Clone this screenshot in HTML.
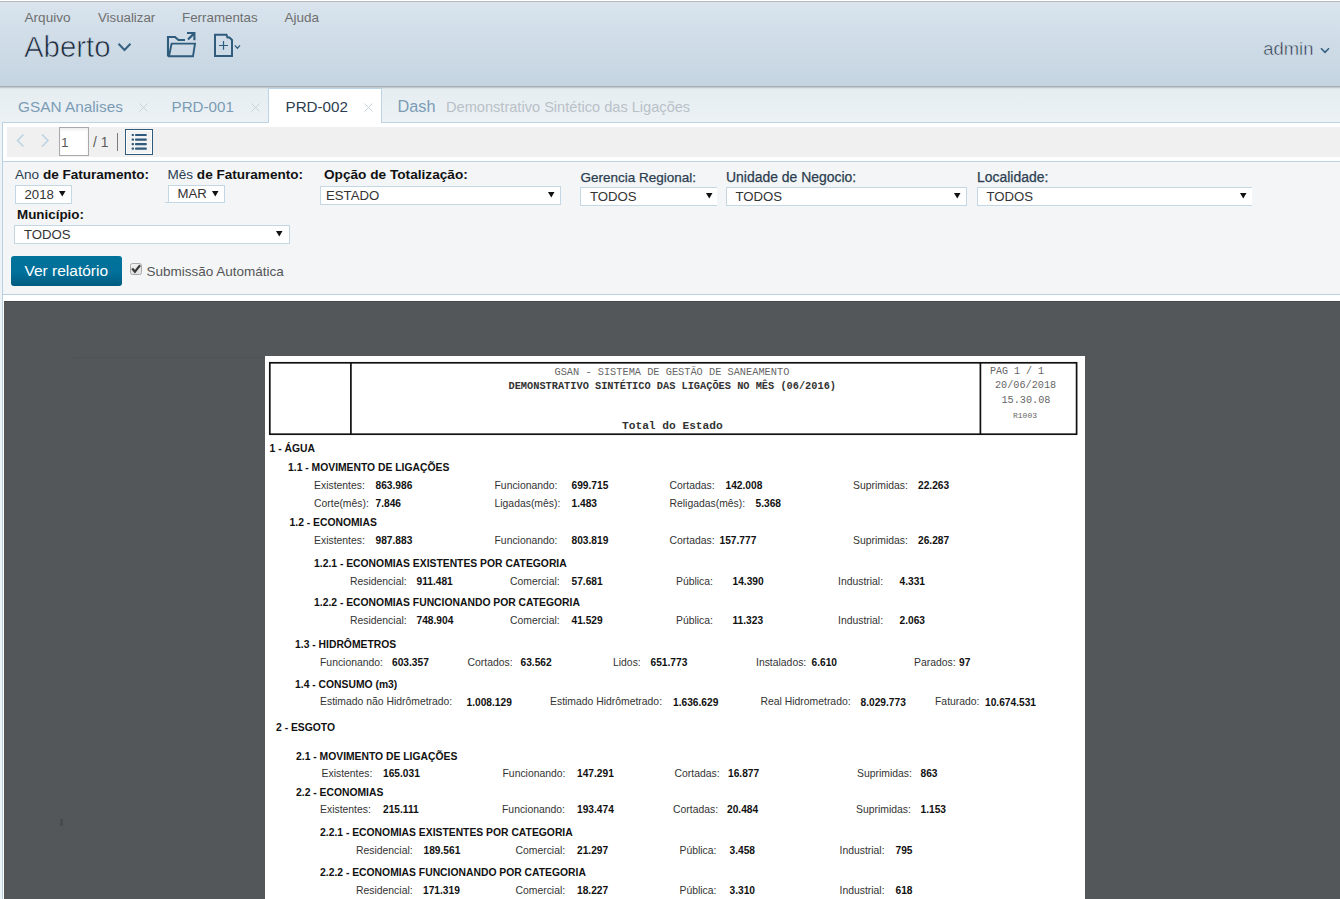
<!DOCTYPE html>
<html><head><meta charset="utf-8"><title>GSAN</title>
<style>
html,body{margin:0;padding:0;width:1340px;height:899px;overflow:hidden;background:#fff;position:relative}
body>span,body>div,body>svg{position:absolute;display:block}
span{white-space:pre;line-height:1;font-family:"Liberation Sans",sans-serif}
</style></head><body>
<div style="left:0px;top:1px;width:1340px;height:1px;background:#b9babd"></div>
<div style="left:0px;top:2px;width:1340px;height:84px;background:linear-gradient(#d9e4ed,#c4d4e1)"></div>
<div style="left:0px;top:87px;width:1340px;height:35px;background:linear-gradient(#e6edf1,#ebf1f5)"></div>
<div style="left:0px;top:86px;width:1340px;height:1px;background:#a9aeb1"></div>
<div style="left:0px;top:87px;width:1340px;height:1px;background:#c3c9cc"></div>
<div style="left:0px;top:88px;width:1340px;height:1px;background:#dce3e6"></div>
<span style="left:24.5px;top:10.5px;font-size:13.6px;font-weight:normal;color:#6f6f6f;font-family:'Liberation Sans', sans-serif;">Arquivo</span>
<span style="left:98.0px;top:10.8px;font-size:13.25px;font-weight:normal;color:#6f6f6f;font-family:'Liberation Sans', sans-serif;">Visualizar</span>
<span style="left:182.0px;top:10.7px;font-size:13.35px;font-weight:normal;color:#6f6f6f;font-family:'Liberation Sans', sans-serif;">Ferramentas</span>
<span style="left:284.5px;top:10.6px;font-size:13.5px;font-weight:normal;color:#6f6f6f;font-family:'Liberation Sans', sans-serif;">Ajuda</span>
<span style="left:24.0px;top:31.8px;font-size:29.4px;font-weight:normal;color:#1c2a38;font-family:'Liberation Sans', sans-serif;-webkit-text-stroke:0.7px #cfdbe5;">Aberto</span>
<svg style="left:117px;top:42px" width="16" height="11"><path d="M1.5 1.8 L7.5 8 L13.5 1.8" fill="none" stroke="#35607f" stroke-width="2"/></svg>
<svg style="left:165px;top:30px" width="34" height="30" viewBox="0 0 34 30">
<path d="M3 26.5 V7 H10 L13.5 10 H20" fill="none" stroke="#2f5b7c" stroke-width="2.1"/>
<path d="M3 26.2 H28 L30 13.6 H6.6 L4 26.2" fill="none" stroke="#2f5b7c" stroke-width="1.9"/>
<path d="M23 9.5 L29 3.5" stroke="#2f5b7c" stroke-width="2.3"/>
<path d="M22 3 H29.4 V10.2" fill="none" stroke="#2f5b7c" stroke-width="2.1"/>
</svg>
<svg style="left:212px;top:32px" width="32" height="28" viewBox="0 0 32 28">
<path d="M3 24 V2.8 H14.5 L15.5 5.5 H17.5 L20 8 V24 Z" fill="none" stroke="#2f5b7c" stroke-width="2"/>
<path d="M11.5 9 V17.8 M7 13.5 H16" stroke="#2f5b7c" stroke-width="1.2"/>
<path d="M22.8 13.4 L25.4 16.2 L28 13.4" fill="none" stroke="#2f5b7c" stroke-width="1.3"/>
</svg>
<span style="left:1263.3px;top:40.4px;font-size:18.4px;font-weight:normal;color:#222f3c;font-family:'Liberation Sans', sans-serif;-webkit-text-stroke:0.55px #cdd9e4;">admin</span>
<svg style="left:1319px;top:46px" width="12" height="9"><path d="M2 2.3 L6 6.3 L10 2.3" fill="none" stroke="#35607f" stroke-width="1.6"/></svg>
<div style="left:268px;top:88px;width:114px;height:35px;background:#fff;border:1px solid #bcd4e3;border-bottom:none;box-sizing:border-box"></div>
<div style="left:0px;top:122px;width:268px;height:1px;background:#bcd4e3"></div>
<div style="left:381px;top:122px;width:959px;height:1px;background:#bcd4e3"></div>
<span style="left:18.0px;top:99.0px;font-size:15.35px;font-weight:normal;color:#7b9cb5;font-family:'Liberation Sans', sans-serif;">GSAN Analises</span>
<span style="left:171.5px;top:99.1px;font-size:15.2px;font-weight:normal;color:#7b9cb5;font-family:'Liberation Sans', sans-serif;">PRD-001</span>
<span style="left:285.5px;top:99.1px;font-size:15.2px;font-weight:normal;color:#2c3e50;font-family:'Liberation Sans', sans-serif;">PRD-002</span>
<span style="left:397.5px;top:98.2px;font-size:16.3px;font-weight:normal;color:#7b9cb5;font-family:'Liberation Sans', sans-serif;">Dash</span>
<span style="left:446.0px;top:99.6px;font-size:14.6px;font-weight:normal;color:#b9c1c7;font-family:'Liberation Sans', sans-serif;">Demonstrativo Sintético das Ligações</span>
<svg style="left:138px;top:102px" width="11" height="11"><path d="M1.5 1.5 L9.5 9.5 M9.5 1.5 L1.5 9.5" stroke="#c9d2d9" stroke-width="1"/></svg>
<svg style="left:250px;top:102px" width="11" height="11"><path d="M1.5 1.5 L9.5 9.5 M9.5 1.5 L1.5 9.5" stroke="#c9d2d9" stroke-width="1"/></svg>
<svg style="left:363px;top:102px" width="11" height="11"><path d="M1.5 1.5 L9.5 9.5 M9.5 1.5 L1.5 9.5" stroke="#c9d2d9" stroke-width="1"/></svg>
<div style="left:0px;top:122px;width:2px;height:777px;background:#eef3f6"></div>
<div style="left:2px;top:122px;width:1px;height:777px;background:#b8d1e1"></div>
<div style="left:3px;top:123px;width:1337px;height:38px;background:#fff"></div>
<div style="left:7px;top:127px;width:1333px;height:30px;background:#f0f0f0"></div>
<svg style="left:14px;top:133px" width="40" height="16"><path d="M9.5 1.5 L3.5 7.5 L9.5 13.5" fill="none" stroke="#bcd3e3" stroke-width="1.6"/><path d="M28 1.5 L34 7.5 L28 13.5" fill="none" stroke="#bcd3e3" stroke-width="1.6"/></svg>
<div style="left:59px;top:127px;width:30px;height:29px;background:#fff;border:1px solid #a9a9a9;box-sizing:border-box;box-shadow:inset 0 2px 3px rgba(0,0,0,0.07)"></div>
<span style="left:61.0px;top:136.0px;font-size:13.6px;font-weight:normal;color:#5a5a5a;font-family:'Liberation Sans', sans-serif;">1</span>
<span style="left:93.0px;top:135.8px;font-size:13.8px;font-weight:normal;color:#5a5a5a;font-family:'Liberation Sans', sans-serif;">/ 1</span>
<div style="left:117px;top:133px;width:1px;height:18px;background:#7a7a7a"></div>
<div style="left:125px;top:129px;width:28px;height:26px;border:1px solid #2f5a7c;box-sizing:border-box;background:#f2f2f2;box-shadow:inset 0 0 0 1px #fff"></div>
<svg style="left:125px;top:129px" width="28" height="26">
<g fill="#2f5a7c"><rect x="6.6" y="4.9" width="2.4" height="2.2" rx="0.8"/><rect x="10" y="4.9" width="11.8" height="2.2" rx="0.8"/>
<rect x="6.6" y="9.5" width="2.4" height="2.2" rx="0.8"/><rect x="10" y="9.5" width="11.8" height="2.2" rx="0.8"/>
<rect x="6.6" y="14" width="2.4" height="2.2" rx="0.8"/><rect x="10" y="14" width="11.8" height="2.2" rx="0.8"/>
<rect x="6.6" y="18.6" width="2.4" height="2.2" rx="0.8"/><rect x="10" y="18.6" width="11.8" height="2.2" rx="0.8"/></g></svg>
<div style="left:3px;top:161px;width:1337px;height:1px;background:#bcd4e3"></div>
<div style="left:3px;top:162px;width:1337px;height:132px;background:#f3f5f7"></div>
<div style="left:3px;top:294px;width:1337px;height:1px;background:#b9d2e1"></div>
<div style="left:3px;top:295px;width:1337px;height:6px;background:#fff"></div>
<span style="left:15.0px;top:168.2px;font-size:13.55px;font-weight:normal;color:#111;font-family:'Liberation Sans', sans-serif;"><span style="color:#2c3e50">Ano</span> <b>de Faturamento:</b></span>
<div style="left:15px;top:185px;width:57px;height:19px;background:#fff;box-sizing:border-box;border:1px solid #c3d7e4;"></div>
<span style="left:24.5px;top:188.2px;font-size:13.2px;font-weight:normal;color:#333;font-family:'Liberation Sans', sans-serif;">2018</span>
<svg style="left:59px;top:191px" width="7" height="6"><path d="M0 0 H6.5 L3.25 5.5Z" fill="#111"/></svg>
<span style="left:167.5px;top:168.2px;font-size:13.55px;font-weight:normal;color:#111;font-family:'Liberation Sans', sans-serif;"><span style="color:#2c3e50">Mês</span> <b>de Faturamento:</b></span>
<div style="left:168px;top:185px;width:57px;height:18px;background:#fff;box-sizing:border-box;border:1px solid #c3d7e4;"></div>
<span style="left:177.5px;top:187.2px;font-size:13.2px;font-weight:normal;color:#333;font-family:'Liberation Sans', sans-serif;">MAR</span>
<svg style="left:212px;top:191px" width="7" height="6"><path d="M0 0 H6.5 L3.25 5.5Z" fill="#111"/></svg>
<div style="left:165px;top:202px;width:20px;height:1px;background:#c3d7e4"></div>
<span style="left:324.0px;top:168.2px;font-size:13.65px;font-weight:bold;color:#111;font-family:'Liberation Sans', sans-serif;">Opção de Totalização:</span>
<div style="left:320px;top:186px;width:241px;height:19px;background:#fff;box-sizing:border-box;border:1px solid #c3d7e4;"></div>
<span style="left:326.0px;top:189.2px;font-size:13.2px;font-weight:normal;color:#333;font-family:'Liberation Sans', sans-serif;">ESTADO</span>
<svg style="left:548px;top:192px" width="7" height="6"><path d="M0 0 H6.5 L3.25 5.5Z" fill="#111"/></svg>
<span style="left:580.5px;top:170.6px;font-size:13.5px;font-weight:normal;color:#2c3e50;font-family:'Liberation Sans', sans-serif;-webkit-text-stroke:0.25px #2c3e50;">Gerencia Regional:</span>
<div style="left:580px;top:187px;width:137px;height:19px;background:#fff;box-sizing:border-box;border:1px solid #c3d7e4;border-right:none;"></div>
<span style="left:590.0px;top:190.2px;font-size:13.2px;font-weight:normal;color:#333;font-family:'Liberation Sans', sans-serif;">TODOS</span>
<svg style="left:706px;top:193px" width="7" height="6"><path d="M0 0 H6.5 L3.25 5.5Z" fill="#111"/></svg>
<span style="left:726.0px;top:170.9px;font-size:13.95px;font-weight:normal;color:#2c3e50;font-family:'Liberation Sans', sans-serif;-webkit-text-stroke:0.25px #2c3e50;">Unidade de Negocio:</span>
<div style="left:726px;top:187px;width:241px;height:19px;background:#fff;box-sizing:border-box;border:1px solid #c3d7e4;"></div>
<span style="left:735.5px;top:190.2px;font-size:13.2px;font-weight:normal;color:#333;font-family:'Liberation Sans', sans-serif;">TODOS</span>
<svg style="left:954px;top:193px" width="7" height="6"><path d="M0 0 H6.5 L3.25 5.5Z" fill="#111"/></svg>
<span style="left:977.0px;top:170.9px;font-size:13.95px;font-weight:normal;color:#2c3e50;font-family:'Liberation Sans', sans-serif;-webkit-text-stroke:0.25px #2c3e50;">Localidade:</span>
<div style="left:977px;top:187px;width:275px;height:19px;background:#fff;box-sizing:border-box;border:1px solid #c3d7e4;border-right:none;"></div>
<span style="left:986.5px;top:190.2px;font-size:13.2px;font-weight:normal;color:#333;font-family:'Liberation Sans', sans-serif;">TODOS</span>
<svg style="left:1240px;top:193px" width="7" height="6"><path d="M0 0 H6.5 L3.25 5.5Z" fill="#111"/></svg>
<span style="left:17.0px;top:208.4px;font-size:13.4px;font-weight:bold;color:#111;font-family:'Liberation Sans', sans-serif;">Município:</span>
<div style="left:14px;top:225px;width:276px;height:19px;background:#fff;box-sizing:border-box;border:1px solid #c3d7e4;"></div>
<span style="left:24.0px;top:228.2px;font-size:13.2px;font-weight:normal;color:#333;font-family:'Liberation Sans', sans-serif;">TODOS</span>
<svg style="left:276px;top:231px" width="7" height="6"><path d="M0 0 H6.5 L3.25 5.5Z" fill="#111"/></svg>
<div style="left:11px;top:256px;width:111px;height:30px;background:linear-gradient(#03739b 0%,#01709a 55%,#005b7f 100%);border-radius:3px"></div>
<span style="left:24.5px;top:262.7px;font-size:15.5px;font-weight:normal;color:#fff;font-family:'Liberation Sans', sans-serif;">Ver relatório</span>
<div style="left:130px;top:263px;width:12px;height:12px;background:linear-gradient(#f0f0f0,#e2e2e2);border:1px solid #a8a8a8;border-radius:2.5px;box-sizing:border-box"></div>
<svg style="left:130px;top:263px" width="12" height="12"><path d="M2.9 6.3 L4.9 8.7 L9.4 3.1" fill="none" stroke="#3a3a3a" stroke-width="2.2" stroke-linecap="square"/></svg>
<span style="left:146.5px;top:264.6px;font-size:13.5px;font-weight:normal;color:#555;font-family:'Liberation Sans', sans-serif;">Submissão Automática</span>
<div style="left:4px;top:301px;width:1336px;height:598px;background:#545759"></div>
<div style="left:4px;top:301px;width:1336px;height:1px;background:#46494b"></div>
<div style="left:74px;top:357px;width:191px;height:1px;background:#4f5254"></div>
<div style="left:60px;top:819px;width:3px;height:7px;background:#484b4d"></div>
<div style="left:265px;top:356px;width:820px;height:543px;background:#fff"></div>
<svg style="left:265px;top:356px" width="820" height="90"><g fill="none" stroke="#111" stroke-width="1.7"><rect x="4.8" y="6.8" width="806.8" height="71.4"/><path d="M85.9 6.8 V78.2 M715.4 6.8 V78.2"/></g></svg>
<span style="left:554.5px;top:366.5px;font-size:10.3px;font-weight:normal;color:#666;font-family:'Liberation Mono', monospace;">GSAN - SISTEMA DE GESTÃO DE SANEAMENTO</span>
<span style="left:508.5px;top:380.8px;font-size:10.3px;font-weight:bold;color:#333;font-family:'Liberation Mono', monospace;">DEMONSTRATIVO SINTÉTICO DAS LIGAÇÕES NO MÊS (06/2016)</span>
<span style="left:622.0px;top:420.6px;font-size:11.2px;font-weight:bold;color:#333;font-family:'Liberation Mono', monospace;">Total do Estado</span>
<span style="left:990.0px;top:367.1px;font-size:10px;font-weight:normal;color:#666;font-family:'Liberation Mono', monospace;">PAG 1 / 1</span>
<span style="left:995.0px;top:381.0px;font-size:10.2px;font-weight:normal;color:#666;font-family:'Liberation Mono', monospace;">20/06/2018</span>
<span style="left:1001.5px;top:396.0px;font-size:10.2px;font-weight:normal;color:#666;font-family:'Liberation Mono', monospace;">15.30.08</span>
<span style="left:1013.0px;top:411.6px;font-size:8px;font-weight:normal;color:#666;font-family:'Liberation Mono', monospace;">R1003</span>
<span style="left:269.5px;top:444.1px;font-size:10.35px;font-weight:bold;color:#111;font-family:'Liberation Sans', sans-serif;">1 - ÁGUA</span>
<span style="left:288.0px;top:463.2px;font-size:10.35px;font-weight:bold;color:#111;font-family:'Liberation Sans', sans-serif;">1.1 - MOVIMENTO DE LIGAÇÕES</span>
<span style="left:314.0px;top:480.8px;font-size:10.4px;font-weight:normal;color:#333;font-family:'Liberation Sans', sans-serif;">Existentes:</span>
<span style="left:375.5px;top:481.0px;font-size:10.2px;font-weight:bold;color:#111;font-family:'Liberation Sans', sans-serif;">863.986</span>
<span style="left:494.5px;top:480.8px;font-size:10.4px;font-weight:normal;color:#333;font-family:'Liberation Sans', sans-serif;">Funcionando:</span>
<span style="left:571.5px;top:481.0px;font-size:10.2px;font-weight:bold;color:#111;font-family:'Liberation Sans', sans-serif;">699.715</span>
<span style="left:669.5px;top:480.8px;font-size:10.4px;font-weight:normal;color:#333;font-family:'Liberation Sans', sans-serif;">Cortadas:</span>
<span style="left:725.5px;top:481.0px;font-size:10.2px;font-weight:bold;color:#111;font-family:'Liberation Sans', sans-serif;">142.008</span>
<span style="left:853.0px;top:480.8px;font-size:10.4px;font-weight:normal;color:#333;font-family:'Liberation Sans', sans-serif;">Suprimidas:</span>
<span style="left:918.0px;top:481.0px;font-size:10.2px;font-weight:bold;color:#111;font-family:'Liberation Sans', sans-serif;">22.263</span>
<span style="left:314.0px;top:499.1px;font-size:10.4px;font-weight:normal;color:#333;font-family:'Liberation Sans', sans-serif;">Corte(mês):</span>
<span style="left:375.5px;top:499.3px;font-size:10.2px;font-weight:bold;color:#111;font-family:'Liberation Sans', sans-serif;">7.846</span>
<span style="left:494.5px;top:499.1px;font-size:10.4px;font-weight:normal;color:#333;font-family:'Liberation Sans', sans-serif;">Ligadas(mês):</span>
<span style="left:571.5px;top:499.3px;font-size:10.2px;font-weight:bold;color:#111;font-family:'Liberation Sans', sans-serif;">1.483</span>
<span style="left:669.5px;top:499.1px;font-size:10.4px;font-weight:normal;color:#333;font-family:'Liberation Sans', sans-serif;">Religadas(mês):</span>
<span style="left:755.5px;top:499.3px;font-size:10.2px;font-weight:bold;color:#111;font-family:'Liberation Sans', sans-serif;">5.368</span>
<span style="left:289.5px;top:518.4px;font-size:10.35px;font-weight:bold;color:#111;font-family:'Liberation Sans', sans-serif;">1.2 - ECONOMIAS</span>
<span style="left:314.0px;top:535.8px;font-size:10.4px;font-weight:normal;color:#333;font-family:'Liberation Sans', sans-serif;">Existentes:</span>
<span style="left:375.5px;top:536.0px;font-size:10.2px;font-weight:bold;color:#111;font-family:'Liberation Sans', sans-serif;">987.883</span>
<span style="left:494.5px;top:535.8px;font-size:10.4px;font-weight:normal;color:#333;font-family:'Liberation Sans', sans-serif;">Funcionando:</span>
<span style="left:571.5px;top:536.0px;font-size:10.2px;font-weight:bold;color:#111;font-family:'Liberation Sans', sans-serif;">803.819</span>
<span style="left:669.5px;top:535.8px;font-size:10.4px;font-weight:normal;color:#333;font-family:'Liberation Sans', sans-serif;">Cortadas:</span>
<span style="left:719.5px;top:536.0px;font-size:10.2px;font-weight:bold;color:#111;font-family:'Liberation Sans', sans-serif;">157.777</span>
<span style="left:853.0px;top:535.8px;font-size:10.4px;font-weight:normal;color:#333;font-family:'Liberation Sans', sans-serif;">Suprimidas:</span>
<span style="left:918.0px;top:536.0px;font-size:10.2px;font-weight:bold;color:#111;font-family:'Liberation Sans', sans-serif;">26.287</span>
<span style="left:314.0px;top:559.3px;font-size:10.35px;font-weight:bold;color:#111;font-family:'Liberation Sans', sans-serif;">1.2.1 - ECONOMIAS EXISTENTES POR CATEGORIA</span>
<span style="left:350.0px;top:576.7px;font-size:10.4px;font-weight:normal;color:#333;font-family:'Liberation Sans', sans-serif;">Residencial:</span>
<span style="left:416.5px;top:576.9px;font-size:10.2px;font-weight:bold;color:#111;font-family:'Liberation Sans', sans-serif;">911.481</span>
<span style="left:510.0px;top:576.7px;font-size:10.4px;font-weight:normal;color:#333;font-family:'Liberation Sans', sans-serif;">Comercial:</span>
<span style="left:571.5px;top:576.9px;font-size:10.2px;font-weight:bold;color:#111;font-family:'Liberation Sans', sans-serif;">57.681</span>
<span style="left:676.0px;top:576.7px;font-size:10.4px;font-weight:normal;color:#333;font-family:'Liberation Sans', sans-serif;">Pública:</span>
<span style="left:732.5px;top:576.9px;font-size:10.2px;font-weight:bold;color:#111;font-family:'Liberation Sans', sans-serif;">14.390</span>
<span style="left:838.0px;top:576.7px;font-size:10.4px;font-weight:normal;color:#333;font-family:'Liberation Sans', sans-serif;">Industrial:</span>
<span style="left:899.5px;top:576.9px;font-size:10.2px;font-weight:bold;color:#111;font-family:'Liberation Sans', sans-serif;">4.331</span>
<span style="left:314.0px;top:598.2px;font-size:10.35px;font-weight:bold;color:#111;font-family:'Liberation Sans', sans-serif;">1.2.2 - ECONOMIAS FUNCIONANDO POR CATEGORIA</span>
<span style="left:350.0px;top:616.1px;font-size:10.4px;font-weight:normal;color:#333;font-family:'Liberation Sans', sans-serif;">Residencial:</span>
<span style="left:416.5px;top:616.3px;font-size:10.2px;font-weight:bold;color:#111;font-family:'Liberation Sans', sans-serif;">748.904</span>
<span style="left:510.0px;top:616.1px;font-size:10.4px;font-weight:normal;color:#333;font-family:'Liberation Sans', sans-serif;">Comercial:</span>
<span style="left:571.5px;top:616.3px;font-size:10.2px;font-weight:bold;color:#111;font-family:'Liberation Sans', sans-serif;">41.529</span>
<span style="left:676.0px;top:616.1px;font-size:10.4px;font-weight:normal;color:#333;font-family:'Liberation Sans', sans-serif;">Pública:</span>
<span style="left:732.5px;top:616.3px;font-size:10.2px;font-weight:bold;color:#111;font-family:'Liberation Sans', sans-serif;">11.323</span>
<span style="left:838.0px;top:616.1px;font-size:10.4px;font-weight:normal;color:#333;font-family:'Liberation Sans', sans-serif;">Industrial:</span>
<span style="left:899.5px;top:616.3px;font-size:10.2px;font-weight:bold;color:#111;font-family:'Liberation Sans', sans-serif;">2.063</span>
<span style="left:295.0px;top:640.3px;font-size:10.35px;font-weight:bold;color:#111;font-family:'Liberation Sans', sans-serif;">1.3 - HIDRÔMETROS</span>
<span style="left:320.0px;top:657.5px;font-size:10.4px;font-weight:normal;color:#333;font-family:'Liberation Sans', sans-serif;">Funcionando:</span>
<span style="left:392.0px;top:657.7px;font-size:10.2px;font-weight:bold;color:#111;font-family:'Liberation Sans', sans-serif;">603.357</span>
<span style="left:467.5px;top:657.5px;font-size:10.4px;font-weight:normal;color:#333;font-family:'Liberation Sans', sans-serif;">Cortados:</span>
<span style="left:520.5px;top:657.7px;font-size:10.2px;font-weight:bold;color:#111;font-family:'Liberation Sans', sans-serif;">63.562</span>
<span style="left:613.0px;top:657.5px;font-size:10.4px;font-weight:normal;color:#333;font-family:'Liberation Sans', sans-serif;">Lidos:</span>
<span style="left:650.5px;top:657.7px;font-size:10.2px;font-weight:bold;color:#111;font-family:'Liberation Sans', sans-serif;">651.773</span>
<span style="left:756.0px;top:657.5px;font-size:10.4px;font-weight:normal;color:#333;font-family:'Liberation Sans', sans-serif;">Instalados:</span>
<span style="left:811.5px;top:657.7px;font-size:10.2px;font-weight:bold;color:#111;font-family:'Liberation Sans', sans-serif;">6.610</span>
<span style="left:914.0px;top:657.5px;font-size:10.4px;font-weight:normal;color:#333;font-family:'Liberation Sans', sans-serif;">Parados:</span>
<span style="left:959.0px;top:657.7px;font-size:10.2px;font-weight:bold;color:#111;font-family:'Liberation Sans', sans-serif;">97</span>
<span style="left:295.0px;top:679.5px;font-size:10.35px;font-weight:bold;color:#111;font-family:'Liberation Sans', sans-serif;">1.4 - CONSUMO (m3)</span>
<span style="left:320.0px;top:697.3px;font-size:10.4px;font-weight:normal;color:#333;font-family:'Liberation Sans', sans-serif;">Estimado não Hidrômetrado:</span>
<span style="left:466.5px;top:697.5px;font-size:10.2px;font-weight:bold;color:#111;font-family:'Liberation Sans', sans-serif;">1.008.129</span>
<span style="left:550.0px;top:697.3px;font-size:10.4px;font-weight:normal;color:#333;font-family:'Liberation Sans', sans-serif;">Estimado Hidrômetrado:</span>
<span style="left:673.0px;top:697.5px;font-size:10.2px;font-weight:bold;color:#111;font-family:'Liberation Sans', sans-serif;">1.636.629</span>
<span style="left:760.5px;top:697.3px;font-size:10.4px;font-weight:normal;color:#333;font-family:'Liberation Sans', sans-serif;">Real Hidrometrado:</span>
<span style="left:860.5px;top:697.5px;font-size:10.2px;font-weight:bold;color:#111;font-family:'Liberation Sans', sans-serif;">8.029.773</span>
<span style="left:935.0px;top:697.3px;font-size:10.4px;font-weight:normal;color:#333;font-family:'Liberation Sans', sans-serif;">Faturado:</span>
<span style="left:985.0px;top:697.5px;font-size:10.2px;font-weight:bold;color:#111;font-family:'Liberation Sans', sans-serif;">10.674.531</span>
<span style="left:276.0px;top:722.6px;font-size:10.35px;font-weight:bold;color:#111;font-family:'Liberation Sans', sans-serif;">2 - ESGOTO</span>
<span style="left:296.0px;top:751.9px;font-size:10.35px;font-weight:bold;color:#111;font-family:'Liberation Sans', sans-serif;">2.1 - MOVIMENTO DE LIGAÇÕES</span>
<span style="left:321.5px;top:769.2px;font-size:10.4px;font-weight:normal;color:#333;font-family:'Liberation Sans', sans-serif;">Existentes:</span>
<span style="left:383.0px;top:769.4px;font-size:10.2px;font-weight:bold;color:#111;font-family:'Liberation Sans', sans-serif;">165.031</span>
<span style="left:502.5px;top:769.2px;font-size:10.4px;font-weight:normal;color:#333;font-family:'Liberation Sans', sans-serif;">Funcionando:</span>
<span style="left:577.0px;top:769.4px;font-size:10.2px;font-weight:bold;color:#111;font-family:'Liberation Sans', sans-serif;">147.291</span>
<span style="left:674.5px;top:769.2px;font-size:10.4px;font-weight:normal;color:#333;font-family:'Liberation Sans', sans-serif;">Cortadas:</span>
<span style="left:728.0px;top:769.4px;font-size:10.2px;font-weight:bold;color:#111;font-family:'Liberation Sans', sans-serif;">16.877</span>
<span style="left:857.0px;top:769.2px;font-size:10.4px;font-weight:normal;color:#333;font-family:'Liberation Sans', sans-serif;">Suprimidas:</span>
<span style="left:920.5px;top:769.4px;font-size:10.2px;font-weight:bold;color:#111;font-family:'Liberation Sans', sans-serif;">863</span>
<span style="left:296.0px;top:787.7px;font-size:10.35px;font-weight:bold;color:#111;font-family:'Liberation Sans', sans-serif;">2.2 - ECONOMIAS</span>
<span style="left:320.0px;top:805.0px;font-size:10.4px;font-weight:normal;color:#333;font-family:'Liberation Sans', sans-serif;">Existentes:</span>
<span style="left:383.0px;top:805.2px;font-size:10.2px;font-weight:bold;color:#111;font-family:'Liberation Sans', sans-serif;">215.111</span>
<span style="left:502.0px;top:805.0px;font-size:10.4px;font-weight:normal;color:#333;font-family:'Liberation Sans', sans-serif;">Funcionando:</span>
<span style="left:577.0px;top:805.2px;font-size:10.2px;font-weight:bold;color:#111;font-family:'Liberation Sans', sans-serif;">193.474</span>
<span style="left:673.0px;top:805.0px;font-size:10.4px;font-weight:normal;color:#333;font-family:'Liberation Sans', sans-serif;">Cortadas:</span>
<span style="left:727.0px;top:805.2px;font-size:10.2px;font-weight:bold;color:#111;font-family:'Liberation Sans', sans-serif;">20.484</span>
<span style="left:856.0px;top:805.0px;font-size:10.4px;font-weight:normal;color:#333;font-family:'Liberation Sans', sans-serif;">Suprimidas:</span>
<span style="left:920.5px;top:805.2px;font-size:10.2px;font-weight:bold;color:#111;font-family:'Liberation Sans', sans-serif;">1.153</span>
<span style="left:320.0px;top:827.8px;font-size:10.35px;font-weight:bold;color:#111;font-family:'Liberation Sans', sans-serif;">2.2.1 - ECONOMIAS EXISTENTES POR CATEGORIA</span>
<span style="left:356.0px;top:845.9px;font-size:10.4px;font-weight:normal;color:#333;font-family:'Liberation Sans', sans-serif;">Residencial:</span>
<span style="left:423.5px;top:846.1px;font-size:10.2px;font-weight:bold;color:#111;font-family:'Liberation Sans', sans-serif;">189.561</span>
<span style="left:515.5px;top:845.9px;font-size:10.4px;font-weight:normal;color:#333;font-family:'Liberation Sans', sans-serif;">Comercial:</span>
<span style="left:577.0px;top:846.1px;font-size:10.2px;font-weight:bold;color:#111;font-family:'Liberation Sans', sans-serif;">21.297</span>
<span style="left:679.5px;top:845.9px;font-size:10.4px;font-weight:normal;color:#333;font-family:'Liberation Sans', sans-serif;">Pública:</span>
<span style="left:729.5px;top:846.1px;font-size:10.2px;font-weight:bold;color:#111;font-family:'Liberation Sans', sans-serif;">3.458</span>
<span style="left:839.5px;top:845.9px;font-size:10.4px;font-weight:normal;color:#333;font-family:'Liberation Sans', sans-serif;">Industrial:</span>
<span style="left:895.5px;top:846.1px;font-size:10.2px;font-weight:bold;color:#111;font-family:'Liberation Sans', sans-serif;">795</span>
<span style="left:320.0px;top:868.4px;font-size:10.35px;font-weight:bold;color:#111;font-family:'Liberation Sans', sans-serif;">2.2.2 - ECONOMIAS FUNCIONANDO POR CATEGORIA</span>
<span style="left:356.0px;top:885.7px;font-size:10.4px;font-weight:normal;color:#333;font-family:'Liberation Sans', sans-serif;">Residencial:</span>
<span style="left:423.0px;top:885.9px;font-size:10.2px;font-weight:bold;color:#111;font-family:'Liberation Sans', sans-serif;">171.319</span>
<span style="left:515.5px;top:885.7px;font-size:10.4px;font-weight:normal;color:#333;font-family:'Liberation Sans', sans-serif;">Comercial:</span>
<span style="left:577.0px;top:885.9px;font-size:10.2px;font-weight:bold;color:#111;font-family:'Liberation Sans', sans-serif;">18.227</span>
<span style="left:679.5px;top:885.7px;font-size:10.4px;font-weight:normal;color:#333;font-family:'Liberation Sans', sans-serif;">Pública:</span>
<span style="left:729.5px;top:885.9px;font-size:10.2px;font-weight:bold;color:#111;font-family:'Liberation Sans', sans-serif;">3.310</span>
<span style="left:839.5px;top:885.7px;font-size:10.4px;font-weight:normal;color:#333;font-family:'Liberation Sans', sans-serif;">Industrial:</span>
<span style="left:895.5px;top:885.9px;font-size:10.2px;font-weight:bold;color:#111;font-family:'Liberation Sans', sans-serif;">618</span>
</body></html>
